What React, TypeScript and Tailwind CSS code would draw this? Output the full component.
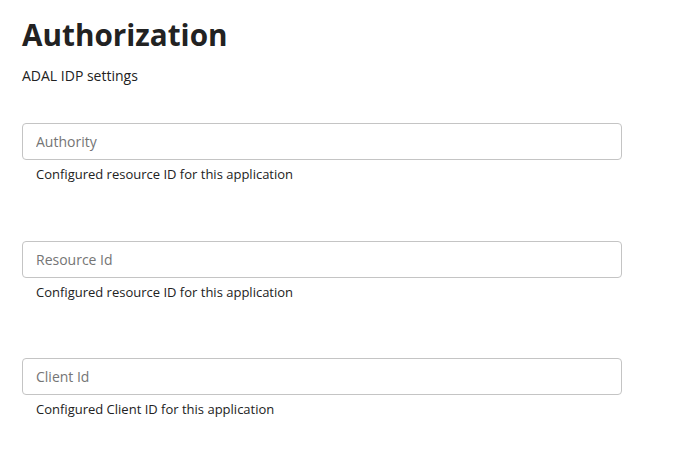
import React from "react";

const fields = [
  { placeholder: "Authority", help: "Configured resource ID for this application" },
  { placeholder: "Resource Id", help: "Configured resource ID for this application" },
  { placeholder: "Client Id", help: "Configured Client ID for this application" },
];

export default function App() {
  return (
    <div className="min-h-[454px] bg-white pl-[22px] pt-[14px] text-[#1f1f1f]" style={{ fontFamily: '"Open Sans", sans-serif' }}>
      <h1 className="text-[29.7px] font-bold leading-[42px] text-[#222]">Authorization</h1>
      <p className="mt-[10px] text-[14px] leading-[19px] text-[#222]">ADAL IDP settings</p>
      <div className="mt-[38px] flex flex-col gap-[57.5px]">
        {fields.map((f) => (
          <div key={f.placeholder} className="flex flex-col">
            <input
              placeholder={f.placeholder}
              className="h-[37px] w-[600px] rounded-[4px] border border-[#c4c4c4] px-[13px] text-[14px] text-[#222] outline-none placeholder:text-[#757575]"
            />
            <p className="mt-[5px] pl-[14px] text-[13px] leading-[18px] text-[#222]">{f.help}</p>
          </div>
        ))}
      </div>
    </div>
  );
}
